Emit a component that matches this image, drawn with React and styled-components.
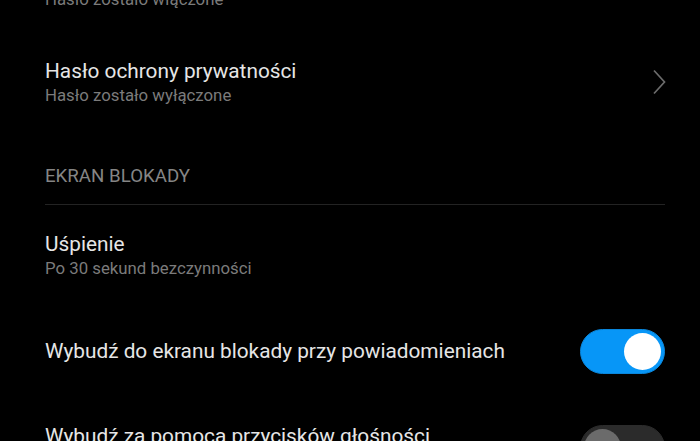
import React from "react";
import styled, { createGlobalStyle } from "styled-components";

const Global = createGlobalStyle`
  html, body {
    margin: 0;
    padding: 0;
    background: #000;
    overflow: hidden;
  }
  body {
    font-family: Roboto, "Noto Sans", "Liberation Sans", sans-serif;
    -webkit-font-smoothing: antialiased;
  }
`;

const Screen = styled.div`
  width: 700px;
  height: 441px;
  overflow: hidden;
  background: #000;
`;

const List = styled.div`
  display: flex;
  flex-direction: column;
  margin-top: -62px;
  padding: 0 35px 0 45px;
`;

const Row = styled.div`
  display: flex;
  align-items: center;
  gap: 20px;
  padding: 24px 0;
  min-height: 48px;
`;

const Texts = styled.div`
  flex: 1;
  display: flex;
  flex-direction: column;
  min-width: 0;
`;

const Title = styled.div`
  font-size: 20.8px;
  line-height: 26px;
  color: #e6e6e6;
  white-space: nowrap;
`;

const Subtitle = styled.div`
  font-size: 16.8px;
  line-height: 22px;
  color: #7b7b7b;
  white-space: nowrap;
`;

const SectionHeader = styled.div`
  font-size: 18.7px;
  line-height: 22px;
  color: #858585;
  padding: 35px 0 17px;
  margin-bottom: 2px;
  border-bottom: 1px solid #232323;
  text-transform: uppercase;
`;

const Track = styled.div`
  flex: none;
  width: 85px;
  height: 45px;
  border-radius: 23px;
  box-sizing: border-box;
  background: ${(p) => (p.$on ? "#0796f7" : "#2b2b2b")};
  border: 1px solid ${(p) => (p.$on ? "#0a86db" : "#2b2b2b")};
  display: flex;
  align-items: center;
  justify-content: ${(p) => (p.$on ? "flex-end" : "flex-start")};
  padding: 0 3px;
`;

const Knob = styled.div`
  width: 37px;
  height: 37px;
  border-radius: 50%;
  background: ${(p) => (p.$on ? "#ffffff" : "#6b6b6b")};
`;

const Chevron = () => (
  <svg width="14" height="26" viewBox="0 0 14 26" style={{ flex: "none", marginRight: "-1px" }}>
    <path d="M2 1.5 L12.5 13 L2 24.5" fill="none" stroke="#6c6c6c" strokeWidth="1.7" />
  </svg>
);

const Toggle = ({ on }) => (
  <Track $on={on}>
    <Knob $on={on} />
  </Track>
);

const Item = ({ title, subtitle, chevron, toggle }) => (
  <Row>
    <Texts>
      <Title>{title}</Title>
      {subtitle && <Subtitle>{subtitle}</Subtitle>}
    </Texts>
    {chevron && <Chevron />}
    {toggle !== undefined && <Toggle on={toggle} />}
  </Row>
);

export default function App() {
  return (
    <Screen>
      <Global />
      <List>
        <Item title="Hasło blokady ekranu" subtitle="Hasło zostało włączone" chevron />
        <Item title="Hasło ochrony prywatności" subtitle="Hasło zostało wyłączone" chevron />
        <SectionHeader>Ekran blokady</SectionHeader>
        <Item title="Uśpienie" subtitle="Po 30 sekund bezczynności" />
        <Item title="Wybudź do ekranu blokady przy powiadomieniach" toggle={true} />
        <Item
          title="Wybudź za pomocą przycisków głośności"
          subtitle="Ekran zostanie wybudzony po naciśnięciu przycisku"
          toggle={false}
        />
      </List>
    </Screen>
  );
}
